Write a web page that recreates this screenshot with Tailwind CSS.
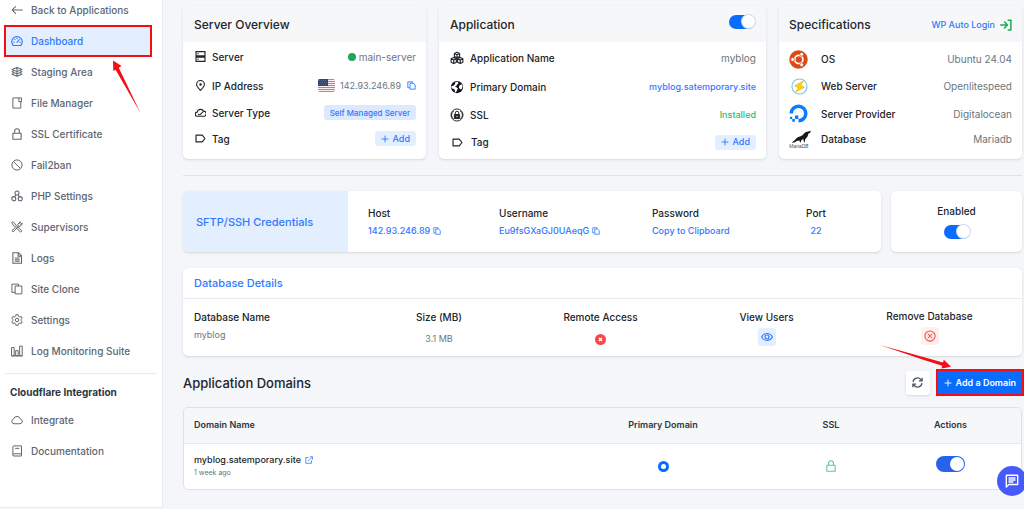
<!DOCTYPE html>
<html lang="en">
<head>
<meta charset="utf-8">
<meta name="viewport" content="width=device-width, initial-scale=1">
<title>Application Dashboard</title>
<script src="https://cdn.jsdelivr.net/npm/@tailwindcss/browser@4"></script>
</head>
<body class="relative min-h-screen overflow-x-hidden bg-[#f4f6fa] font-['Inter',sans-serif] text-[10px] leading-[14px] text-[#212529]">

<svg class="hidden" aria-hidden="true">
  <symbol id="copy" viewBox="0 0 16 16" fill="none" stroke="currentColor" stroke-width="1.6" stroke-linejoin="round"><path d="M5 12H1.500V1.500H10V4"/><path d="M5.500 4H11l3.500 3V14.500H5.500z"/></symbol>
  <symbol id="plus" viewBox="0 0 16 16" fill="none" stroke="currentColor" stroke-width="1.8" stroke-linecap="round"><path d="M8 2v12M2 8h12"/></symbol>
  <symbol id="tag" viewBox="0 0 16 16" fill="none" stroke="currentColor" stroke-width="1.7" stroke-linejoin="round"><path d="M1.500 3h9L14.500 8l-4 5h-9z"/></symbol>
  <symbol id="lock" viewBox="0 0 16 16" fill="none" stroke="currentColor" stroke-width="1.4" stroke-linejoin="round"><path d="M2.500 7h11v8h-11zM4.800 7V4.200a3.200 3.200 0 0 1 6.400 0V7"/></symbol>
</svg>

<div class="flex min-h-screen">
  <aside class="relative mb-px w-[163px] shrink-0 border-r border-b border-[#e9ecef] bg-white text-[#5c6670]">
    <nav aria-label="Application" class="font-medium">
      <a href="#" class="flex h-[25px] items-center gap-2 pb-[5px] pl-[11px]">
        <svg class="size-3" viewBox="0 0 16 16" fill="none" stroke="currentColor" stroke-width="1.4" stroke-linecap="round" stroke-linejoin="round"><path d="M15 8H1.500M6 3.500L1.500 8 6 12.500"/></svg>Back to Applications</a>
      <a href="#" aria-current="page" class="mr-[10px] ml-1 flex h-[32px] items-center gap-2 border-2 border-[#f40d12] bg-[#e3efff] pl-[5px] text-[#2f78ff]">
        <svg class="size-3" viewBox="0 0 16 16" fill="none" stroke="currentColor" stroke-width="1.500" stroke-linecap="round" stroke-linejoin="round"><path d="M3 14a7 7 0 1 1 10 0zM8 10l3-4M3.800 9.500h.4M5 6h.4M8 4.500h.1M12 9.500h.3"/></svg>Dashboard</a>
      <a href="#" class="-mt-px flex h-[31px] items-center gap-2 pl-[11px]">
        <svg class="size-3" viewBox="0 0 16 16" fill="none" stroke="currentColor" stroke-width="1.400" stroke-linejoin="round"><path d="M8 2l6.500 2.800L8 7.500 1.500 4.800zM3.500 6.500l-2 1.300L8 10.500l6.500-2.700-2-1.300M3.500 9.500l-2 1.400L8 13.700l6.500-2.800-2-1.400M8 2v11"/></svg>Staging Area</a>
      <a href="#" class="flex h-[31px] items-center gap-2 pl-[11px]">
        <svg class="size-3" viewBox="0 0 16 16" fill="none" stroke="currentColor" stroke-width="1.300"><path d="M2.500 1.200h11.500v5h-1v8.600H2.500zM10.500 1.200v5H14"/></svg>File Manager</a>
      <a href="#" class="flex h-[31px] items-center gap-2 pl-[11px]">
        <svg class="size-3"><use href="#lock"/></svg>SSL Certificate</a>
      <a href="#" class="flex h-[31px] items-center gap-2 pl-[11px]">
        <svg class="size-3" viewBox="0 0 16 16" fill="none" stroke="currentColor" stroke-width="1.300"><circle cx="8" cy="8" r="6.800"/><path d="M3.200 3.200l9.600 9.600"/></svg>Fail2ban</a>
      <a href="#" class="flex h-[31px] items-center gap-2 pl-[11px]">
        <svg class="size-3" viewBox="0 0 16 16" fill="none" stroke="currentColor" stroke-width="1.400"><circle cx="8" cy="4" r="2.700"/><circle cx="3.700" cy="11.500" r="2.700"/><circle cx="12.300" cy="11.500" r="2.700"/><path d="M6.400 6.200L5 9M9.600 6.200L11 9"/></svg>PHP Settings</a>
      <a href="#" class="flex h-[31px] items-center gap-2 pl-[11px]">
        <svg class="size-3" viewBox="0 0 16 16" fill="none" stroke="currentColor" stroke-width="1.300" stroke-linejoin="round"><path d="M1 2l1.500-1L6 4l.3 1.500L14.500 13l-1.800 2-7.700-8.200L3.500 6.500zM9.500 6.800l-.3-2.500L12 1.200l1 .2-1.500 2.200 1 1L15 3l.2 1.300-3.200 3-2.200-.2L3 14.500l-1.800-1.600L6 8.500"/></svg>Supervisors</a>
      <a href="#" class="flex h-[31px] items-center gap-2 pl-[11px]">
        <svg class="size-3" viewBox="0 0 16 16" fill="none" stroke="currentColor" stroke-width="1.400"><path d="M2.500 1h7.500l4 4v10H2.500zM9.500 1v4.500H14M5 8h6.500M5 10.200h6.500M5 12.400h6.500"/></svg>Logs</a>
      <a href="#" class="flex h-[31px] items-center gap-2 pl-[11px]">
        <svg class="size-3" viewBox="0 0 16 16" fill="none" stroke="currentColor" stroke-width="1.300"><path d="M5.500 12.500H1.200V1.500H10V4M5.500 4h9v10.500h-9z"/></svg>Site Clone</a>
      <a href="#" class="flex h-[31px] items-center gap-2 pl-[11px]">
        <svg class="size-3" viewBox="0 0 16 16" fill="none" stroke="currentColor" stroke-width="1.300" stroke-linejoin="round"><path d="M6.600 1h2.800l.5 2.100 1.500.9 2.100-.7 1.400 2.400L13.300 7.200v1.600l1.600 1.500-1.400 2.400-2.100-.7-1.500.9-.5 2.100H6.600l-.5-2.100-1.500-.9-2.100.7-1.400-2.400 1.600-1.500V7.200L1.100 5.700l1.400-2.400 2.100.7 1.500-.9z"/><circle cx="8" cy="8" r="2.300"/></svg>Settings</a>
      <a href="#" class="flex h-[31px] items-center gap-2 pl-[11px]">
        <svg class="size-3" viewBox="0 0 16 16" fill="none" stroke="currentColor" stroke-width="1.300"><path d="M.7 3.500h3.500v11H.7zM6.200 7.500h3.300v7H6.200zM11.500 1.500h3.500v13h-3.500zM.7 14.500H15"/></svg>Log Monitoring Suite</a>
    </nav>
    <div class="mx-[5px] mt-[7px] border-t border-[#e9ecef]"></div>
    <h2 class="mt-[11px] ml-[10px] font-bold text-[#2b3643]">Cloudflare Integration</h2>
    <nav aria-label="Cloudflare" class="mt-[5px] font-medium">
      <a href="#" class="flex h-[31px] items-center gap-2 pl-[11px]">
        <svg class="size-3" viewBox="0 0 16 16" fill="none" stroke="currentColor" stroke-width="1.300"><path d="M4 13a3.300 3.300 0 0 1-.4-6.500 4.600 4.600 0 0 1 8.800 0A3.300 3.300 0 0 1 12 13z"/></svg>Integrate</a>
      <a href="#" class="flex h-[31px] items-center gap-2 pl-[11px]">
        <svg class="size-3" viewBox="0 0 16 16" fill="none" stroke="currentColor" stroke-width="1.300"><path d="M2.500 12.800V2.500A1.300 1.300 0 0 1 3.800 1.200H14v13.500H4a1.500 1.500 0 0 1-1.500-1.900 1.500 1.500 0 0 1 1.500-1.100h10M5.500 4.500h5.500"/></svg>Documentation</a>
    </nav>
    <svg class="absolute top-[60px] left-[110px] h-[54px] w-[32px]" viewBox="0 0 32 54" fill="#f40d12" aria-hidden="true"><path d="M3 0.500L11.500 6l-2.700 1.800L30.500 53 5.600 9.800 3.300 11z"/></svg>
  </aside>

  <main class="min-w-0 flex-1 pt-[6px] pr-[2px] pl-5">
    <div class="grid grid-cols-[243fr_327fr_243fr] gap-x-[13px]">
      <section class="overflow-hidden rounded-[5px] bg-white pb-[7px] shadow-sm">
        <h2 class="flex h-9 items-center bg-[#f6f7f9] px-[11px] pt-px text-xs font-medium">Server Overview</h2>
        <div class="pr-[10px] pl-3 font-medium">
          <div class="flex h-[29px] items-center">
            <svg class="mr-[6px] size-[11px]" viewBox="0 0 16 16" fill="none" stroke="currentColor" stroke-width="1.700"><path d="M1.500 1h13v6h-13zM1.500 9h13v6h-13zM3.500 4h2M3.500 12h2"/></svg>
            <span>Server</span><span class="ml-auto size-2 rounded-full bg-[#20a756]"></span><span class="ml-[3px] font-normal text-[#6c757d]">main-server</span>
          </div>
          <div class="flex h-[29px] items-center">
            <svg class="mr-[6px] size-[11px]" viewBox="0 0 16 16" fill="none" stroke="currentColor" stroke-width="1.600"><path d="M8 15.200C4.500 11.500 2.300 9.200 2.300 6.500a5.700 5.700 0 0 1 11.400 0c0 2.700-2.200 5-5.700 8.700z"/><circle cx="8" cy="6.500" r="1" fill="currentColor"/></svg>
            <span>IP Address</span>
            <svg class="ml-auto h-[13px] w-[17px] rounded-[2px]" viewBox="0 0 17 13" role="img" aria-label="United States"><path fill="#fbeff0" d="M0 0h17v13H0z"/><path stroke="#e2717b" d="M0 .5h17M0 2.500h17M0 4.500h17M0 6.500h17M0 8.500h17M0 10.500h17M0 12.500h17"/><path fill="#32456b" d="M0 0h10v7H0z"/><path stroke="#7483a0" stroke-dasharray="1 1" stroke-width=".6" d="M1 1.500h8M2 3.500h7M1 5.500h8"/></svg>
            <span class="ml-[5px] text-[9px] font-normal text-[#6c757d]">142.93.246.89</span>
            <button aria-label="Copy IP address" class="ml-[6px] text-[#2f78ff]"><svg class="size-[9px]"><use href="#copy"/></svg></button>
          </div>
          <div class="flex h-[25px] items-center">
            <svg class="mr-[6px] size-[11px]" viewBox="0 0 16 16" fill="none" stroke="currentColor" stroke-width="1.600" stroke-linecap="round"><path d="M3.500 13.500a3 3 0 0 1-.3-6A5 5 0 0 1 12.500 6a3.700 3.700 0 0 1 0 7.500zM7.500 11l4-4M5 10.500l1 .8"/></svg>
            <span>Server Type</span><span class="ml-auto flex h-[15px] items-center rounded-[3px] bg-[#dce9fe] px-[6px] text-[8px] text-[#2f78ff]">Self Managed Server</span>
          </div>
          <div class="flex h-[27px] items-center">
            <svg class="mr-[6px] size-[11px]"><use href="#tag"/></svg>
            <span>Tag</span><button class="ml-auto flex h-[15px] items-center gap-1 rounded-[3px] bg-[#e3efff] px-[6px] text-[9px] text-[#2f78ff]"><svg class="size-2"><use href="#plus"/></svg>Add</button>
          </div>
        </div>
      </section>

      <section class="overflow-hidden rounded-[5px] bg-white pb-1 shadow-sm">
        <div class="flex h-9 items-center justify-between bg-[#f6f7f9] px-[11px] pt-px">
          <h2 class="text-xs font-medium">Application</h2>
          <input type="checkbox" checked aria-label="Application enabled" class="mb-[5px] h-[14px] w-[26px] appearance-none rounded-full bg-[#0a6cff] before:ml-[13px] before:block before:size-[13px] before:rounded-full before:bg-white before:ring-1 before:ring-[#cfdcec] before:content-['']">
        </div>
        <div class="pr-[10px] pl-[11px] pt-px font-medium">
          <div class="flex h-[30px] items-center">
            <svg class="mr-[6px] size-[14px]" viewBox="0 0 16 16" fill="none" stroke="currentColor" stroke-width="1.300" stroke-linejoin="round"><path d="M8 1.500l3 1.300v3.400L8 7.600 5 6.200V2.800zM5 2.900l3 1.300 3-1.300M8 4.200v3.400M4.300 7.500l3 1.400v4L4.300 14.300l-3-1.400v-4zM1.300 9l3 1.400 3-1.400M4.300 10.400v3.900M11.700 7.500l3 1.400v4l-3 1.400-3-1.400v-4zM8.700 9l3 1.400 3-1.400M11.700 10.400v3.900"/></svg>
            <span>Application Name</span><span class="ml-auto font-normal text-[#6c757d]">myblog</span>
          </div>
          <div class="flex h-7 items-center">
            <svg class="mr-[6px] size-[14px]" viewBox="0 0 16 16"><circle cx="8" cy="8" r="7" fill="#111418"/><path fill="#fff" d="M8.500 1.800l-3 1.400.5 1.300L4 6.500l-2.500.6.3 2.400 2.700.7 1.200 1.600-.4 1.700 1.400.8 1.500-3 .8-1.700L7 8 5.500 7.500l2-1 .5-1.500 1.700-1zM11 6l2.600-1.200.8 2.700-1 2.700-1.900.3L10 8.300z"/></svg>
            <span>Primary Domain</span><a href="#" class="ml-auto text-[9px] text-[#2f78ff]">myblog.satemporary.site</a>
          </div>
          <div class="flex h-7 items-center">
            <svg class="mr-[6px] size-[14px]" viewBox="0 0 16 16" fill="none" stroke="currentColor" stroke-width="1.100"><circle cx="8" cy="8" r="6.900"/><path d="M4 12.500a5.500 5.500 0 0 1 .2-9M12 12.500a5.500 5.500 0 0 0-.2-9"/><path fill="currentColor" d="M5 7.500h6v4.500H5z"/><path d="M6 7.500V5.700a2 2 0 0 1 4 0v1.800"/><path stroke="#fff" d="M8 9v1.500"/></svg>
            <span>SSL</span><span class="ml-auto text-[9px] text-[#2fb967]">Installed</span>
          </div>
          <div class="flex h-[26px] items-center">
            <svg class="mr-2 ml-[2px] size-[11px]"><use href="#tag"/></svg>
            <span>Tag</span><button class="ml-auto flex h-[15px] items-center gap-1 rounded-[3px] bg-[#e3efff] px-[6px] text-[9px] text-[#2f78ff]"><svg class="size-2"><use href="#plus"/></svg>Add</button>
          </div>
        </div>
      </section>

      <section class="overflow-hidden rounded-[5px] bg-white shadow-sm">
        <div class="flex h-9 items-center justify-between bg-[#f6f7f9] px-[10px] pt-px">
          <h2 class="text-xs font-medium">Specifications</h2>
          <a href="#" class="flex items-center gap-[5px] text-[9px] font-medium text-[#2f78ff]">WP Auto Login
            <svg class="size-3 text-[#20a756]" viewBox="0 0 16 16" fill="none" stroke="currentColor" stroke-width="2" stroke-linecap="round" stroke-linejoin="round"><path d="M1 8h8.500M6 4l4 4-4 4M11 1.500h3.500v13H11"/></svg></a>
        </div>
        <div class="px-[10px] pt-1 font-medium">
          <div class="flex h-[26px] items-center">
            <span class="w-8"><svg class="size-[19px]" viewBox="0 0 20 20" fill="none"><circle cx="10" cy="10" r="9.700" fill="#dd4814"/><circle cx="10.300" cy="10" r="4.300" stroke="#fff" stroke-width="1.900"/><g fill="#fff" stroke="#dd4814" stroke-width=".8"><circle cx="3.800" cy="10" r="2"/><circle cx="13.300" cy="4.500" r="2"/><circle cx="13.300" cy="15.500" r="2"/></g></svg></span>
            <span>OS</span><span class="ml-auto font-normal text-[#6c757d]">Ubuntu 24.04</span>
          </div>
          <div class="flex h-7 items-center">
            <span class="w-8 pl-[2px]"><svg class="size-[17px]" viewBox="0 0 18 18" fill="none"><circle cx="9" cy="9" r="8" stroke="#79c8e8" stroke-width="1.200"/><path fill="#f6cd21" stroke="#e0b010" stroke-width=".4" d="M14 2.500L3.500 8.200l4 2.300L4 15.500l10.500-5.700-4-2.300z"/></svg></span>
            <span>Web Server</span><span class="ml-auto font-normal text-[#6c757d]">Openlitespeed</span>
          </div>
          <div class="flex h-[27px] items-center">
            <span class="w-8"><svg class="size-[19px]" viewBox="0 0 20 20" fill="#0a7cff"><path d="M10 19.500v-3.800a5.800 5.800 0 1 0-5.800-5.800H.5A9.500 9.500 0 1 1 10 19.500zM6.200 12h3.700v3.700H6.200zM3.400 15.800h2.800v2.800H3.400zM1 13.500h2.400v2.300H1z"/></svg></span>
            <span>Server Provider</span><span class="ml-auto font-normal text-[#6c757d]">Digitalocean</span>
          </div>
          <div class="flex h-6 items-center">
            <span class="w-8"><svg class="h-[18px] w-[22px]" viewBox="0 0 22 18" fill="#16181d"><path d="M21.700.8c-1 .1-.9.500-2.600.6-3 .1-4.200 2-5.300 3.700-1.300 1.400-4.200 1.300-6 3-1.500 1.400-2.200 2.800-5.300 4.600l3.700-.5 1.200-1.200 3-.5.5 1.500.9.500.3-2 2.200-1.600.5 2.600 1 .9.300-3.200c2-1.400 3-3.300 3.200-5.400 1.200-.6 2.100-.6 2.400-3z"/><text x="0" y="17.700" class="font-['Liberation_Sans'] text-[5px] italic" fill="#4c5259">MariaDB</text></svg></span>
            <span>Database</span><span class="ml-auto font-normal text-[#6c757d]">Mariadb</span>
          </div>
        </div>
      </section>
    </div>

    <hr class="mt-4 border-[#dfe3e8]">

    <div class="mt-[15px] grid grid-cols-[698fr_131fr] gap-x-[10px]">
      <section class="flex h-[61px] overflow-hidden rounded-[5px] bg-white shadow-sm">
        <h2 class="flex w-[165px] shrink-0 items-center bg-[#e3efff] pl-[13px] text-[11px] font-medium text-[#2f78ff]">SFTP/SSH Credentials</h2>
        <dl class="grid flex-1 grid-cols-[131fr_153fr_126fr_76fr] pt-[15px] pr-[27px] pl-5 font-medium whitespace-nowrap">
          <div><dt>Host</dt><dd class="mt-1 flex items-center gap-[3px] text-[9px] text-[#2f78ff]">142.93.246.89<button aria-label="Copy host"><svg class="size-2"><use href="#copy"/></svg></button></dd></div>
          <div><dt>Username</dt><dd class="mt-1 flex items-center gap-[3px] text-[9px] text-[#2f78ff]">Eu9fsGXaGJ0UAeqG<button aria-label="Copy username"><svg class="size-2"><use href="#copy"/></svg></button></dd></div>
          <div><dt>Password</dt><dd class="mt-1 text-[9px] text-[#2f78ff]"><button class="block">Copy to Clipboard</button></dd></div>
          <div class="text-center"><dt>Port</dt><dd class="mt-1 text-[9px] text-[#2f78ff]">22</dd></div>
        </dl>
      </section>
      <section class="flex flex-col items-center rounded-[5px] bg-white pt-[13px] shadow-sm">
        <label for="sftp" class="font-medium">Enabled</label>
        <input id="sftp" type="checkbox" checked class="mt-[7px] h-[14px] w-[26px] appearance-none rounded-full bg-[#0a6cff] before:ml-[13px] before:block before:size-[13px] before:rounded-full before:bg-white before:ring-1 before:ring-[#cfdcec] before:content-['']">
      </section>
    </div>

    <section class="mt-4 h-[88px] overflow-hidden rounded-[5px] bg-white shadow-sm">
      <h2 class="flex h-[31px] items-center border-b border-[#e9ecef] px-[11px] text-[11px] font-medium text-[#2f78ff]">Database Details</h2>
      <table class="w-full table-fixed">
        <colgroup><col class="w-[174px]"><col class="w-[164px]"><col class="w-[159px]"><col class="w-[173px]"><col></colgroup>
        <thead>
          <tr class="h-[29px]">
            <th class="pt-[6px] pl-[11px] text-left font-medium">Database Name</th>
            <th class="pt-[6px] font-medium">Size (MB)</th>
            <th class="pt-[6px] font-medium">Remote Access</th>
            <th class="pt-[6px] font-medium">View Users</th>
            <th class="pt-1 pr-4 font-medium">Remove Database</th>
          </tr>
        </thead>
        <tbody>
          <tr class="align-top text-[9px] text-[#6c757d]">
            <td class="pl-[11px]">myblog</td>
            <td class="pt-1 text-center">3.1 MB</td>
            <td class="pt-[6px]"><svg class="mx-auto size-[11px]" viewBox="0 0 16 16" role="img" aria-label="Disabled"><circle cx="8" cy="8" r="8" fill="#f8474b"/><path d="M5.800 5.800l4.400 4.400M10.200 5.800l-4.400 4.400" stroke="#fff" stroke-width="2"/></svg></td>
            <td><button aria-label="View users" class="mx-auto flex size-[18px] items-center justify-center rounded-[3px] bg-[#e3efff] text-[#2f78ff]"><svg class="size-3" viewBox="0 0 16 16" fill="none" stroke="currentColor" stroke-width="1.500"><path d="M.8 8C4.500 1.800 11.500 1.800 15.200 8 11.500 14.200 4.500 14.200.8 8z"/><circle cx="8" cy="8" r="2.600"/></svg></button></td>
            <td class="pr-4"><button aria-label="Remove database" class="mx-auto -mt-px flex size-[18px] items-center justify-center rounded-[3px] bg-[#fdf1f0] text-[#ef4b45]"><svg class="size-3" viewBox="0 0 16 16" fill="none" stroke="currentColor" stroke-width="1.400"><circle cx="8" cy="8" r="6.800"/><path d="M5 5l6 6M11 5l-6 6"/></svg></button></td>
          </tr>
        </tbody>
      </table>
    </section>

    <div class="mt-[13px] -mr-[2px] flex items-center">
      <h2 class="text-[13px] leading-5 font-medium">Application Domains</h2>
      <button aria-label="Refresh" class="mr-[6px] ml-auto flex size-6 items-center justify-center rounded-[3px] bg-white text-[#4b5563] shadow-sm"><svg class="size-[11px]" viewBox="0 0 16 16" fill="none" stroke="currentColor" stroke-width="1.900"><path d="M1.500 7a6.500 6.500 0 0 1 11.500-3.200L14.500 5.500M14.700 1v4.700H10M14.500 9A6.500 6.500 0 0 1 3 12.200L1.500 10.500M1.300 15v-4.700H6"/></svg></button>
      <button class="flex h-[27px] items-center gap-1 border-2 border-[#f40d12] bg-[#0a6cff] px-[6px] text-[9px] font-semibold text-white"><svg class="size-2"><use href="#plus"/></svg>Add a Domain</button>
    </div>

    <div class="mt-[11px] overflow-hidden rounded-[5px] border border-[#dee2e8] bg-white">
      <table class="w-full table-fixed">
        <colgroup><col><col class="w-[186px]"><col class="w-[150px]"><col class="w-[115px]"></colgroup>
        <thead>
          <tr class="h-[35px] border-b border-[#e6e9ed] bg-[#f6f7f9] text-[9px] text-[#2b3643]">
            <th class="pl-[10px] text-left font-semibold">Domain Name</th><th class="font-semibold">Primary Domain</th><th class="font-semibold">SSL</th><th class="pr-[26px] font-semibold">Actions</th>
          </tr>
        </thead>
        <tbody>
          <tr class="h-[46px]">
            <td class="pl-[10px]"><a href="#" class="flex items-center gap-1 text-[9px] font-medium">myblog.satemporary.site<svg class="size-2 text-[#2f78ff]" viewBox="0 0 16 16" fill="none" stroke="currentColor" stroke-width="1.600"><path d="M7 3H1.500v11.500H13V9M9.500 1.500H15V7M14.500 2L6.500 10"/></svg></a><p class="text-[7px] leading-3 text-[#6c757d]">1 week ago</p></td>
            <td><input type="radio" checked aria-label="Primary domain" class="mx-auto block size-[11px] appearance-none rounded-full border-[3px] border-[#0a6cff] bg-white"></td>
            <td><svg class="mx-auto size-3 text-[#5ac98a]" role="img" aria-label="SSL installed"><use href="#lock"/></svg></td>
            <td class="pr-[26px] pb-1"><input type="checkbox" checked aria-label="Domain active" class="mx-auto block h-4 w-[29px] appearance-none rounded-full bg-[#2563eb] before:mt-px before:ml-[14px] before:block before:size-[14px] before:rounded-full before:bg-white before:content-['']"></td>
          </tr>
        </tbody>
      </table>
    </div>
  </main>
</div>

<svg class="absolute top-[344px] right-[72px] h-[25px] w-[73px]" viewBox="0 0 73 25" fill="#f40d12" aria-hidden="true"><path d="M1 1l63 17.500.8-2.800 7.200 7-9.500 1.800.7-2.800L45 16z"/></svg>
<button aria-label="Open chat" class="fixed -right-[3px] bottom-[13px] flex size-[30px] items-center justify-center rounded-full bg-[#4659fb] text-white"><svg class="size-[14px]" viewBox="0 0 16 16" fill="none" stroke="currentColor" stroke-width="1.600" stroke-linejoin="round"><path d="M1.500 1.500h13v10.500H4.500L1.500 15zM4 4.500h8M4 6.800h8M4 9.100h5.500"/></svg></button>
</body>
</html>
